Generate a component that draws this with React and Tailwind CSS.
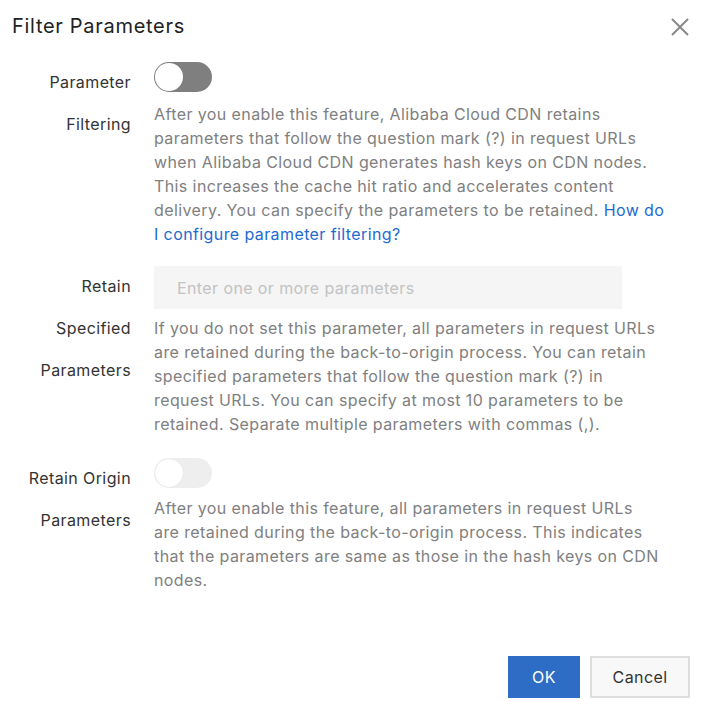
export default function App() {
  const font = { fontFamily: 'Inter, "Noto Sans", sans-serif' };
  return (
    <div className="w-[716px] h-[718px] bg-white relative text-[#333]" style={font}>
      <div className="flex items-center justify-between pl-3 pr-[26px] pt-[12px] h-[40px]">
        <div className="text-[20px] leading-[28px] text-[#222] tracking-[0.7px]">Filter Parameters</div>
        <svg width="20" height="20" viewBox="0 0 20 20" className="mt-[2px]">
          <path d="M2 2 L18 18 M18 2 L2 18" stroke="#888" strokeWidth="2" />
        </svg>
      </div>

      <div className="flex flex-col pt-[21px] tracking-[0.4px]">
        {/* Row 1 */}
        <div className="flex">
          <div className="w-[131px] pl-[16px] text-right text-[16px] leading-[42px]">Parameter Filtering</div>
          <div className="ml-[23px] w-[514px] flex flex-col">
            <div className="mt-[1px] w-[58px] h-[30px] rounded-full bg-[#7f7f7f] p-[1px] flex items-center">
              <div className="w-[28px] h-[28px] rounded-full bg-white"></div>
            </div>
            <p className="mt-[10px] text-[16px] leading-[24px] text-[#808080]">
              After you enable this feature, Alibaba Cloud CDN retains parameters that follow the question mark (?) in request URLs when Alibaba Cloud CDN generates hash keys on CDN nodes. This increases the cache hit ratio and accelerates content delivery. You can specify the parameters to be retained.{' '}
              <span className="text-[#1e6ad0]">How do I configure parameter filtering?</span>
            </p>
          </div>
        </div>

        {/* Row 2 */}
        <div className="flex mt-[19px]">
          <div className="w-[131px] pl-[16px] text-right text-[16px] leading-[42px]">Retain Specified Parameters</div>
          <div className="ml-[23px] w-[514px] flex flex-col">
            <div className="mt-[1px] w-[468px] h-[43px] bg-[#f5f5f5] flex items-center pl-[23px] text-[16px] text-[#c2c2c2]">
              Enter one or more parameters
            </div>
            <p className="mt-[7px] text-[16px] leading-[24px] text-[#808080]">
              If you do not set this parameter, all parameters in request URLs are retained during the back-to-origin process. You can retain specified parameters that follow the question mark (?) in request URLs. You can specify at most 10 parameters to be retained. Separate multiple parameters with commas (,).
            </p>
          </div>
        </div>

        {/* Row 3 */}
        <div className="flex mt-[21px]">
          <div className="w-[131px] pl-[16px] text-right text-[16px] leading-[42px]">Retain Origin Parameters</div>
          <div className="ml-[23px] w-[505px] flex flex-col">
            <div className="mt-[1px] w-[58px] h-[30px] rounded-full bg-[#eeeeee] p-[1px] flex items-center">
              <div className="w-[28px] h-[28px] rounded-full bg-white shadow-[0_0_1px_rgba(0,0,0,0.15)]"></div>
            </div>
            <p className="mt-[8px] text-[16px] leading-[24px] text-[#808080]">
              After you enable this feature, all parameters in request URLs are retained during the back-to-origin process. This indicates that the parameters are same as those in the hash keys on CDN nodes.
            </p>
          </div>
        </div>
      </div>

      <div className="absolute left-0 right-0 top-[656px] flex justify-end gap-[10px] pr-[26px] tracking-[0.4px]">
        <button className="w-[72px] h-[42px] bg-[#2d6dc6] text-white text-[16px]">OK</button>
        <button className="w-[100px] h-[42px] bg-[#f8f8f8] border-2 border-[#dedede] text-[#333] text-[16px]">Cancel</button>
      </div>
    </div>
  );
}
